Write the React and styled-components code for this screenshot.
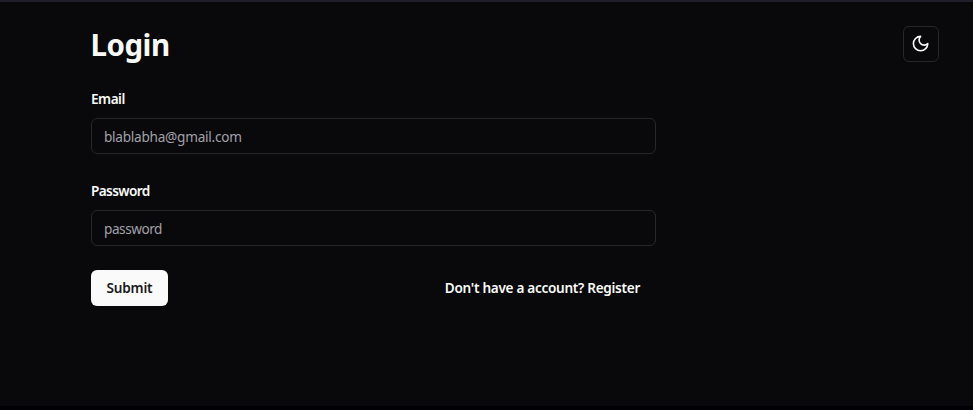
import React from "react";
import styled, { createGlobalStyle } from "styled-components";

const GlobalStyle = createGlobalStyle`
  * { box-sizing: border-box; }
  body { margin: 0; background: #09090b; }
`;

const Page = styled.div`
  display: flex;
  justify-content: space-between;
  align-items: flex-start;
  height: 410px;
  padding: 24px 34px 0 91px;
  overflow: hidden;
  border-top: 2px solid #1f1e2a;
  border-bottom: 4px solid #020004;
  background: #09090b;
  color: #fafafa;
  font-family: "Segoe UI", "Noto Sans", "Open Sans", sans-serif;
  font-size: 13.6px;
`;

const Form = styled.form`
  display: flex;
  flex-direction: column;
  width: 565px;
`;

const Title = styled.h1`
  margin: 0 0 23px;
  padding-top: 1px;
  font-size: 29.5px;
  line-height: 36px;
  font-weight: 700;
  letter-spacing: -0.5px;
  text-indent: -0.5px;
`;

const Field = styled.div`
  display: flex;
  flex-direction: column;
  gap: 7px;
  margin-bottom: 24px;
`;

const Label = styled.label`
  height: 25px;
  line-height: 26px;
  font-weight: 600;
  letter-spacing: ${(p) => p.$spacing};
`;

const Input = styled.input`
  height: 36px;
  padding: 4px 12px;
  border: 1px solid #27272a;
  border-radius: 6px;
  outline: none;
  background: transparent;
  color: #fafafa;
  font: inherit;
  letter-spacing: ${(p) => p.$spacing};
  &::placeholder { color: #a1a1aa; opacity: 1; }
`;

const Actions = styled.div`
  display: flex;
  justify-content: space-between;
  align-items: center;
  padding-right: 16px;
`;

const Submit = styled.button`
  width: 77px;
  height: 36px;
  padding: 0 0 1px;
  border: 0;
  border-radius: 6px;
  background: #fafafa;
  color: #18181b;
  font: inherit;
  font-weight: 600;
  letter-spacing: -0.2px;
`;

const RegisterLink = styled.a`
  color: #fafafa;
  font-weight: 600;
  line-height: 20px;
  letter-spacing: -0.3px;
  white-space: nowrap;
`;

const ThemeButton = styled.button`
  display: flex;
  align-items: center;
  justify-content: center;
  width: 36px;
  height: 36px;
  padding: 0;
  border: 1px solid #27272a;
  border-radius: 6px;
  background: transparent;
  color: #fafafa;
`;

const MoonIcon = () => (
  <svg width="19.2" height="19.2" viewBox="0 0 24 24" fill="none" stroke="currentColor" strokeWidth="2" strokeLinecap="round" strokeLinejoin="round">
    <path d="M12 3a6 6 0 0 0 9 9 9 9 0 1 1-9-9Z" />
  </svg>
);

export default function App() {
  return (
    <Page>
      <GlobalStyle />
      <Form>
        <Title>Login</Title>
        <Field>
          <Label htmlFor="email" $spacing="-0.5px">Email</Label>
          <Input id="email" placeholder="blablabha@gmail.com" $spacing="-0.25px" />
        </Field>
        <Field>
          <Label htmlFor="password" $spacing="-0.62px">Password</Label>
          <Input id="password" type="password" placeholder="password" $spacing="-0.45px" />
        </Field>
        <Actions>
          <Submit type="button">Submit</Submit>
          <RegisterLink>Don't have a account? Register</RegisterLink>
        </Actions>
      </Form>
      <ThemeButton type="button" aria-label="Toggle theme"><MoonIcon /></ThemeButton>
    </Page>
  );
}
